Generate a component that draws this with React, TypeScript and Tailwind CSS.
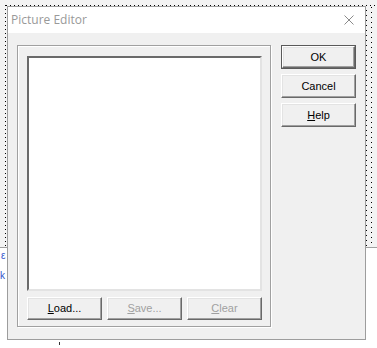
import React from 'react';

function Btn({ children, def, disabled, w = 'w-[75px]', h = 'h-[24px]' }: { children: React.ReactNode; def?: boolean; disabled?: boolean; w?: string; h?: string }) {
  const face = (
    <div className="flex-1 flex items-center justify-center bg-[#f0f0f0] border border-t-white border-l-white border-r-[#696969] border-b-[#696969] shadow-[inset_-1px_-1px_0_#a0a0a0,inset_1px_1px_0_#e3e3e3]">
      <span className={disabled ? 'text-[#a0a0a0]' : 'text-black'}>{children}</span>
    </div>
  );
  return (
    <div className={`${w} ${h} flex ${def ? 'border border-[#5a5a5a]' : ''}`}>{face}</div>
  );
}

export default function App() {
  return (
    <div className="relative w-[377px] h-[348px] bg-white overflow-hidden font-['Liberation_Sans',sans-serif] text-[11px]">
      {/* form designer surface */}
      <div className="relative h-[248px] bg-[#f3f3f3] border-b border-[#a0a0a0]">
        <svg className="absolute inset-0" width="377" height="247">
          <line x1="6" y1="5.5" x2="377" y2="5.5" stroke="#000" strokeWidth="1" strokeDasharray="1 3" />
          <line x1="5.5" y1="5" x2="5.5" y2="247" stroke="#000" strokeWidth="1" strokeDasharray="1 3" />
          <line x1="366.5" y1="5" x2="366.5" y2="247" stroke="#000" strokeWidth="1" strokeDasharray="1 4" />
          <line x1="371.5" y1="7" x2="371.5" y2="247" stroke="#000" strokeWidth="1" strokeDasharray="1 4" />
        </svg>
      </div>
      <div className="absolute left-[1px] top-[250px] text-[10px] leading-[12px] text-[#3355cc]">ε</div>
      <div className="absolute left-[0px] top-[270px] text-[10px] leading-[12px] text-[#3355cc]">k</div>
      <div className="absolute left-[59px] top-[342px] w-[1px] h-[3px] bg-[#333]" />

      {/* dialog */}
      <div className="absolute left-[7px] top-[6px] w-[359px] h-[334px] flex flex-col bg-[#f0f0f0] border border-[#9d9d9d]">
        <div className="h-[26px] bg-white flex items-center justify-between pl-[3px] pr-[11px]">
          <span className="font-['Open_Sans',sans-serif] text-[12px] text-[#999999]">Picture Editor</span>
          <svg width="10" height="10" viewBox="0 0 10 10">
            <path d="M0.5 0.5 L9.5 9.5 M9.5 0.5 L0.5 9.5" stroke="#8a8a8a" strokeWidth="1" fill="none" />
          </svg>
        </div>
        <div className="flex pt-[12px] pl-[9px] gap-[10px]">
          <div className="w-[254px] h-[282px] border border-[#a0a0a0] shadow-[inset_1px_1px_0_#fff,1px_1px_0_#fff] pl-[9px] pt-[10px]">
            <div className="w-[235px] h-[235px] bg-white border-2 border-t-[#6a6a6a] border-l-[#6a6a6a] border-r-[#e3e3e3] border-b-[#e3e3e3]" />
            <div className="flex gap-[5px] mt-[6px]">
              <Btn h="h-[23px]"><span className="underline">L</span>oad...</Btn>
              <Btn h="h-[23px]" disabled><span className="underline">S</span>ave...</Btn>
              <Btn h="h-[23px]" disabled><span className="underline">C</span>lear</Btn>
            </div>
          </div>
          <div className="flex flex-col gap-[5px]">
            <Btn def>OK</Btn>
            <Btn>Cancel</Btn>
            <Btn><span className="underline">H</span>elp</Btn>
          </div>
        </div>
      </div>
    </div>
  );
}
